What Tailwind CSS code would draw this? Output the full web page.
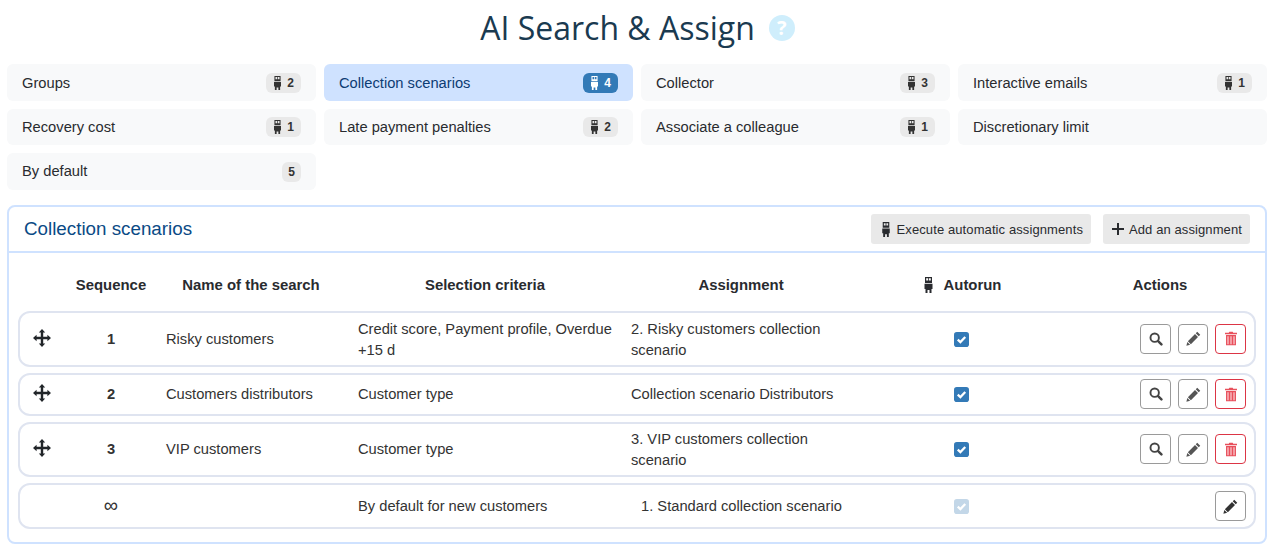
<!DOCTYPE html>
<html lang="en">

<head>
  <meta charset="UTF-8">
  <title>AI Search &amp; Assign</title>
  <script src="https://cdn.jsdelivr.net/npm/@tailwindcss/browser@4"></script>
</head>

<body class="bg-white text-[#292b2f] font-['Liberation_Sans',Arial,sans-serif] text-[14.7px] h-[550px] overflow-hidden">
  <!-- Shared icons -->
  <svg class="hidden">
    <symbol id="robot" viewBox="0 0 10 16">
      <path fill="currentColor" fill-rule="evenodd" d="M1.5 0h7v6h-7zM2.7 1.2v2.4h1.9V1.2zM5.4 1.2v2.4h1.9V1.2zM1 6.8h8V12H8v4H6v-3H4v3H2v-4H1z"/>
    </symbol>
    <symbol id="pencil" viewBox="0 0 16 16">
      <path fill="currentColor" d="M12 .8l3.2 3.2-1.6 1.6-3.2-3.2zM9.6 3.2l3.2 3.2-7.6 7.6L2 10.8zM1.4 11.6l3 3-4 1z"/>
    </symbol>
    <symbol id="search" viewBox="0 0 16 16">
      <circle cx="6.5" cy="6.5" r="4.8" fill="none" stroke="currentColor" stroke-width="2.2"/>
      <path stroke="currentColor" stroke-width="2.8" stroke-linecap="round" d="M10.4 10.4l3.8 3.8"/>
    </symbol>
    <symbol id="trash" viewBox="0 0 14 16">
      <path fill="currentColor" d="M5 0h4l.6 1.4H14v1.6H0V1.4h4.4zM1.2 4h11.6v12H1.2z"/>
      <path fill="#f7b4ba" d="M2.6 5.4h1.8v9.2H2.6zM6.1 5.4h1.8v9.2H6.1zM9.6 5.4h1.8v9.2H9.6z"/>
    </symbol>
    <symbol id="move" viewBox="0 0 18 18">
      <path fill="currentColor" d="M9 0l3.2 3.6H10.2V7.8H14.4V5.8L18 9l-3.6 3.2v-2H10.2v4.2h2L9 18l-3.2-3.6h2V10.2H3.6v2L0 9l3.6-3.2v2h4.2V3.6h-2z"/>
    </symbol>
    <symbol id="check" viewBox="0 0 16 16">
      <rect width="16" height="16" rx="3" fill="currentColor"/>
      <path fill="none" stroke="#fff" stroke-width="2.4" d="M4 8.2l2.8 2.6L12 5.4"/>
    </symbol>
  </svg>

  <h1 class="flex items-center justify-center h-[56px] mb-[8px] pr-[4px] text-[32px] font-['Open_Sans',sans-serif] text-[#1a3a50]">
    AI Search &amp; Assign
    <span class="ml-[14px] -mt-[1px] w-[26px] h-[26px] rounded-full bg-[#cfeefc] text-white text-[20px] font-bold flex items-center justify-center">?</span>
  </h1>

  <!-- Category tabs -->
  <div class="grid grid-cols-4 gap-x-2 gap-y-2 pl-[7px] pr-[12px]">
    <a class="flex items-center justify-between h-[37px] px-[15px] bg-[#f8f9fa] rounded-md"><span class="pt-[1px]">Groups</span>
      <span class="flex items-center gap-[5px] h-[20px] px-[7px] bg-[#e9e9e9] rounded-md text-xs font-bold text-[#333]"><svg class="w-[9px] h-[14px]"><use href="#robot"/></svg>2</span></a>
    <a class="flex items-center justify-between h-[37px] px-[15px] bg-[#cfe2ff] text-[#0d3c73] rounded-md"><span class="pt-[1px]">Collection scenarios</span>
      <span class="flex items-center gap-[5px] h-[20px] px-[7px] bg-[#337ab7] text-white rounded-md text-xs font-bold"><svg class="w-[9px] h-[14px]"><use href="#robot"/></svg>4</span></a>
    <a class="flex items-center justify-between h-[37px] px-[15px] bg-[#f8f9fa] rounded-md"><span class="pt-[1px]">Collector</span>
      <span class="flex items-center gap-[5px] h-[20px] px-[7px] bg-[#e9e9e9] rounded-md text-xs font-bold text-[#333]"><svg class="w-[9px] h-[14px]"><use href="#robot"/></svg>3</span></a>
    <a class="flex items-center justify-between h-[37px] px-[15px] bg-[#f8f9fa] rounded-md"><span class="pt-[1px]">Interactive emails</span>
      <span class="flex items-center gap-[5px] h-[20px] px-[7px] bg-[#e9e9e9] rounded-md text-xs font-bold text-[#333]"><svg class="w-[9px] h-[14px]"><use href="#robot"/></svg>1</span></a>
    <a class="flex items-center justify-between h-[36px] px-[15px] bg-[#f8f9fa] rounded-md"><span class="pt-[1px]">Recovery cost</span>
      <span class="flex items-center gap-[5px] h-[20px] px-[7px] bg-[#e9e9e9] rounded-md text-xs font-bold text-[#333]"><svg class="w-[9px] h-[14px]"><use href="#robot"/></svg>1</span></a>
    <a class="flex items-center justify-between h-[36px] px-[15px] bg-[#f8f9fa] rounded-md"><span class="pt-[1px]">Late payment penalties</span>
      <span class="flex items-center gap-[5px] h-[20px] px-[7px] bg-[#e9e9e9] rounded-md text-xs font-bold text-[#333]"><svg class="w-[9px] h-[14px]"><use href="#robot"/></svg>2</span></a>
    <a class="flex items-center justify-between h-[36px] px-[15px] bg-[#f8f9fa] rounded-md"><span class="pt-[1px]">Associate a colleague</span>
      <span class="flex items-center gap-[5px] h-[20px] px-[7px] bg-[#e9e9e9] rounded-md text-xs font-bold text-[#333]"><svg class="w-[9px] h-[14px]"><use href="#robot"/></svg>1</span></a>
    <a class="flex items-center justify-between h-[36px] px-[15px] bg-[#f8f9fa] rounded-md"><span class="pt-[1px]">Discretionary limit</span></a>
    <a class="flex items-center justify-between h-[37px] px-[15px] bg-[#f8f9fa] rounded-md"><span>By default</span>
      <span class="flex items-center h-[20px] px-[6px] bg-[#e9e9e9] rounded-md text-xs font-bold text-[#333]">5</span></a>
  </div>

  <!-- Panel -->
  <section class="mt-[15px] ml-[7px] mr-[12px] h-[339px] border-2 border-[#cfe2ff] rounded-lg">
    <header class="flex items-center h-[46px] px-[15px] gap-3 border-b-2 border-[#cfe2ff]">
      <h2 class="pt-[1px] text-[18.8px] text-[#0a4a85] mr-auto">Collection scenarios</h2>
      <button class="flex items-center gap-[6px] h-[30px] pl-[10px] pr-[8px] pt-[1px] bg-[#e9e9e9] rounded-[3px] text-[13px] tracking-[0.1px]"><svg class="w-[10px] h-[15px] -mt-[1px]"><use href="#robot"/></svg>Execute automatic assignments</button>
      <button class="flex items-center gap-[5px] h-[30px] pl-[9px] pr-[8px] pt-[1px] bg-[#e9e9e9] rounded-[3px] text-[13px] tracking-[0.1px]"><svg class="w-[12px] h-[12px] -mt-[1px]" viewBox="0 0 12 12"><path fill="currentColor" d="M5 0h2v5h5v2H7v5H5V7H0V5h5z"/></svg>Add an assignment</button>
    </header>

    <div class="px-[9px]">
      <!-- Column headers -->
      <div class="grid grid-cols-[44px_98px_192px_273px_232px_208px_1fr] items-center h-[58px] pt-[7px] font-bold text-center text-[14.9px]">
        <span></span>
        <span>Sequence</span>
        <span class="pr-[10px]">Name of the search</span>
        <span class="pr-[7px]">Selection criteria</span>
        <span>Assignment</span>
        <span class="flex items-center justify-center gap-[10px] pl-[2px]"><svg class="w-[11px] h-[16px]"><use href="#robot"/></svg>Autorun</span>
        <span class="pr-[1px]">Actions</span>
      </div>

      <div class="flex flex-col gap-[6px] text-[#333]">
        <div class="grid grid-cols-[42px_98px_192px_273px_232px_208px_1fr] items-center h-[56px] border-2 border-[#dfe4f0] rounded-xl">
          <svg class="w-[18px] h-[18px] ml-[13px] -mt-[3px] text-[#212529]"><use href="#move"/></svg>
          <span class="font-bold text-center">1</span>
          <span class="pl-[6px]">Risky customers</span>
          <span class="pl-[6px] pt-[1px] leading-[21px]">Credit score, Payment profile, Overdue +15 d</span>
          <span class="pl-[6px] pt-[1px] pr-[20px] leading-[21px]">2. Risky customers collection scenario</span>
          <svg class="w-[15px] h-[15px] mx-auto text-[#337ab7]"><use href="#check"/></svg>
          <div class="flex justify-end gap-[7px] pr-[8px] -mt-[1px]">
            <button class="flex items-center justify-center w-[31px] h-[30px] border border-[#9a9a9a] rounded-[4px] text-[#444]"><svg class="w-[14px] h-[14px]"><use href="#search"/></svg></button>
            <button class="flex items-center justify-center w-[30px] h-[30px] border border-[#9a9a9a] rounded-[4px] text-[#555]"><svg class="w-[15px] h-[15px]"><use href="#pencil"/></svg></button>
            <button class="flex items-center justify-center w-[31px] h-[30px] border border-[#dc3545] rounded-[4px] text-[#e8505c]"><svg class="w-[12px] h-[15px]"><use href="#trash"/></svg></button>
          </div>
        </div>

        <div class="grid grid-cols-[42px_98px_192px_273px_232px_208px_1fr] items-center h-[43px] border-2 border-[#dfe4f0] rounded-xl">
          <svg class="w-[18px] h-[18px] ml-[13px] -mt-[3px] text-[#212529]"><use href="#move"/></svg>
          <span class="font-bold text-center">2</span>
          <span class="pl-[6px]">Customers distributors</span>
          <span class="pl-[6px]">Customer type</span>
          <span class="pl-[6px]">Collection scenario Distributors</span>
          <svg class="w-[15px] h-[15px] mx-auto text-[#337ab7]"><use href="#check"/></svg>
          <div class="flex justify-end gap-[7px] pr-[8px] -mt-[1px]">
            <button class="flex items-center justify-center w-[31px] h-[30px] border border-[#9a9a9a] rounded-[4px] text-[#444]"><svg class="w-[14px] h-[14px]"><use href="#search"/></svg></button>
            <button class="flex items-center justify-center w-[30px] h-[30px] border border-[#9a9a9a] rounded-[4px] text-[#555]"><svg class="w-[15px] h-[15px]"><use href="#pencil"/></svg></button>
            <button class="flex items-center justify-center w-[31px] h-[30px] border border-[#dc3545] rounded-[4px] text-[#e8505c]"><svg class="w-[12px] h-[15px]"><use href="#trash"/></svg></button>
          </div>
        </div>

        <div class="grid grid-cols-[42px_98px_192px_273px_232px_208px_1fr] items-center h-[55px] border-2 border-[#dfe4f0] rounded-xl">
          <svg class="w-[18px] h-[18px] ml-[13px] -mt-[3px] text-[#212529]"><use href="#move"/></svg>
          <span class="font-bold text-center">3</span>
          <span class="pl-[6px]">VIP customers</span>
          <span class="pl-[6px]">Customer type</span>
          <span class="pl-[6px] pr-[20px] leading-[21px]">3. VIP customers collection scenario</span>
          <svg class="w-[15px] h-[15px] mx-auto text-[#337ab7]"><use href="#check"/></svg>
          <div class="flex justify-end gap-[7px] pr-[8px] -mt-[1px]">
            <button class="flex items-center justify-center w-[31px] h-[30px] border border-[#9a9a9a] rounded-[4px] text-[#444]"><svg class="w-[14px] h-[14px]"><use href="#search"/></svg></button>
            <button class="flex items-center justify-center w-[30px] h-[30px] border border-[#9a9a9a] rounded-[4px] text-[#555]"><svg class="w-[15px] h-[15px]"><use href="#pencil"/></svg></button>
            <button class="flex items-center justify-center w-[31px] h-[30px] border border-[#dc3545] rounded-[4px] text-[#e8505c]"><svg class="w-[12px] h-[15px]"><use href="#trash"/></svg></button>
          </div>
        </div>

        <div class="grid grid-cols-[42px_98px_192px_273px_232px_208px_1fr] items-center h-[46px] border-2 border-[#dfe4f0] rounded-xl">
          <span></span>
          <span class="text-center text-[20px] -mt-[3px]">∞</span>
          <span></span>
          <span class="pl-[6px]">By default for new customers</span>
          <span class="pl-[16px] whitespace-nowrap">1. Standard collection scenario</span>
          <svg class="w-[15px] h-[15px] mx-auto text-[#c3d7e8]"><use href="#check"/></svg>
          <div class="flex justify-end pr-[8px]">
            <button class="flex items-center justify-center w-[31px] h-[30px] border border-[#9a9a9a] rounded-[4px] text-[#333]"><svg class="w-[15px] h-[15px]"><use href="#pencil"/></svg></button>
          </div>
        </div>
      </div>
    </div>
  </section>
</body>

</html>
